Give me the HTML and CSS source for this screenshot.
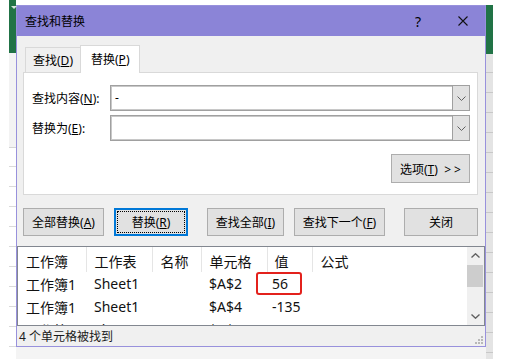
FILE: index.html
```html
<!DOCTYPE html>
<html>
<head>
<meta charset="utf-8">
<title>查找和替换</title>
<meta name="viewport" content="width=device-width, initial-scale=1">
<link rel="stylesheet" href="styles.css">
</head>
<body>
<div class="screen">

  <!-- excel sheet peeking out on the left -->
  <div class="xl-left">
    <div class="xl-col">
      <div class="xl-green"><span class="xl-arrow"></span></div>
      <div class="xl-head"></div>
      <div class="xl-grid"></div>
    </div>
  </div>

  <div class="dlg-col">
    <div class="dialog">
      <div class="titlebar">
        <span class="title">查找和替换</span>
        <span class="help">?</span>
        <svg class="close" width="10" height="10" viewBox="0 0 10 10">
          <path d="M0.5 0.5 L9.5 9.5 M9.5 0.5 L0.5 9.5" stroke="#111" stroke-width="1.1" fill="none"/>
        </svg>
      </div>

      <div class="tabs">
        <div class="tab">查找(<u>D</u>)</div>
        <div class="tab tab-active">替换(<u>P</u>)</div>
      </div>

      <div class="panel">
        <div class="field">
          <label class="field-label">查找内容(<u>N</u>):</label>
          <div class="combo">
            <span class="combo-text">-</span>
            <span class="combo-btn">
              <svg width="9" height="5" viewBox="0 0 9 5"><polyline points="0.5,0.5 4.5,4.5 8.5,0.5" stroke="#606060" fill="none"/></svg>
            </span>
          </div>
        </div>
        <div class="field">
          <label class="field-label">替换为(<u>E</u>):</label>
          <div class="combo">
            <span class="combo-text"></span>
            <span class="combo-btn">
              <svg width="9" height="5" viewBox="0 0 9 5"><polyline points="0.5,0.5 4.5,4.5 8.5,0.5" stroke="#606060" fill="none"/></svg>
            </span>
          </div>
        </div>
        <div class="opts">
          <button class="btn btn-opts">选项(<u>T</u>)&nbsp; &gt; &gt;</button>
        </div>
      </div>

      <div class="actions">
        <button class="btn btn-all">全部替换(<u>A</u>)</button>
        <button class="btn btn-one btn-focus">替换(<u>R</u>)</button>
        <button class="btn btn-findall">查找全部(<u>I</u>)</button>
        <button class="btn btn-next">查找下一个(<u>F</u>)</button>
        <button class="btn btn-close">关闭</button>
      </div>

      <div class="results">
        <div class="grid">
          <table class="ResultTable">
            <colgroup>
              <col class="c-book"><col class="c-sheet"><col class="c-name"><col class="c-cell"><col class="c-val"><col class="c-formula">
            </colgroup>
            <thead>
              <tr>
                <th>工作簿</th>
                <th>工作表</th>
                <th>名称</th>
                <th>单元格</th>
                <th class="val">值</th>
                <th>公式</th>
              </tr>
            </thead>
            <tbody>
              <tr>
                <td>工作簿1</td>
                <td>Sheet1</td>
                <td></td>
                <td>$A$2</td>
                <td class="val">56</td>
                <td></td>
              </tr>
              <tr>
                <td>工作簿1</td>
                <td>Sheet1</td>
                <td></td>
                <td>$A$4</td>
                <td class="val">-135</td>
                <td></td>
              </tr>
              <tr>
                <td>工作簿1</td>
                <td>Sheet1</td>
                <td></td>
                <td>$A$12</td>
                <td class="val">-56</td>
                <td></td>
              </tr>
            </tbody>
          </table>
        </div>
        <div class="scrollbar">
          <div class="sb-btn">
            <svg width="9" height="5" viewBox="0 0 9 5"><polyline points="0.5,4.5 4.5,0.8 8.5,4.5" stroke="#606060" stroke-width="1.4" fill="none"/></svg>
          </div>
          <div class="sb-thumb"></div>
          <div class="sb-track"></div>
          <div class="sb-btn">
            <svg width="9" height="5" viewBox="0 0 9 5"><polyline points="0.5,0.5 4.5,4.2 8.5,0.5" stroke="#606060" stroke-width="1.4" fill="none"/></svg>
          </div>
        </div>
        <!-- red annotation round the found value -->
        <span class="mark"></span>
      </div>

      <div class="status">
        <span>4 个单元格被找到</span>
        <svg class="grip" width="9" height="9" viewBox="0 0 9 9" fill="#b8b8b8">
          <rect x="7" y="1" width="2" height="2"/>
          <rect x="4" y="4" width="2" height="2"/><rect x="7" y="4" width="2" height="2"/>
          <rect x="1" y="7" width="2" height="2"/><rect x="4" y="7" width="2" height="2"/><rect x="7" y="7" width="2" height="2"/>
        </svg>
      </div>
    </div>
    <div class="below"></div>
  </div>

  <!-- excel sheet peeking out on the right -->
  <div class="xl-right">
    <div class="xl-col xl-col-r">
      <div class="xl-green xl-green-r"></div>
      <div class="xl-grid xl-shade"></div>
    </div>
  </div>

</div>
</body>
</html>
```

FILE: styles.css
```css
* { box-sizing: border-box; }
html, body { margin: 0; padding: 0; }
body {
  width: 509px;
  height: 359px;
  overflow: hidden;
  background-color: #ffffff;
  font-family: "Noto Sans", "Noto Sans CJK SC", sans-serif;
  font-size: 12px;
  color: #000000;
}
u { text-underline-offset: 1px; }

.screen { display: flex; height: 359px; }

/* excel background strips */
.xl-left { width: 16px; flex: none; padding-left: 9px; }
.xl-right { width: 23px; flex: none; }
.xl-col { width: 7px; height: 100%; display: flex; flex-direction: column; }
.xl-col-r { width: 7px; }
.xl-green { height: 53px; background-color: #217346; position: relative; }
.xl-green-r { height: 49px; margin-top: 5px; }
.xl-arrow {
  position: absolute;
  left: 2px;
  top: 6px;
  border-left: 3px solid transparent;
  border-right: 3px solid transparent;
  border-top: 3px solid #d8e6dd;
}
.xl-head { height: 95px; background-color: #f3f3f3; border-bottom: 1px solid #d4d4d4; }
.xl-grid {
  flex: 1;
  background-color: #ffffff;
  background-image: repeating-linear-gradient(to bottom, transparent 0 18px, #dadada 18px 19px, transparent 19px 20px);
}
.xl-shade {
  background-color: #e4e4e4;
  background-image: repeating-linear-gradient(to bottom, transparent 0 18px, #c8c8c8 18px 19px, transparent 19px 20px);
}

/* dialog */
.dlg-col { width: 470px; flex: none; display: flex; flex-direction: column; padding-top: 5px; }
.below { flex: 1; background-color: #f4f4f4; }
.dialog {
  height: 342px;
  border: 1px solid #9891dc;
  background-color: #f0f0f0;
  display: flex;
  flex-direction: column;
}

.titlebar {
  height: 30px;
  flex: none;
  background-color: #8b84d7;
  display: flex;
  align-items: center;
  padding-left: 8px;
}
.title { flex: 1; font-size: 12px; }
.help { font-size: 14px; margin-right: 37px; }
.close { margin-right: 17px; }

.tabs {
  height: 37px;
  flex: none;
  display: flex;
  align-items: flex-end;
  padding-left: 8px;
  margin-bottom: -1px;
  position: relative;
  z-index: 1;
}
.tab {
  width: 55px;
  height: 25px;
  margin-bottom: 1px;
  border: 1px solid #d9d9d9;
  border-right: 0;
  border-bottom: 0;
  padding-left: 7px;
  line-height: 26px;
  white-space: nowrap;
}
.tab-active {
  width: 60px;
  height: 28px;
  margin-bottom: 0;
  background-color: #ffffff;
  border-right: 1px solid #d9d9d9;
  padding-left: 10px;
  line-height: 28px;
}

.panel {
  height: 123px;
  flex: none;
  margin: 0 7px 0 6px;
  background-color: #ffffff;
  border: 1px solid #d9d9d9;
  padding: 12px 7px 0 8px;
}
.field { display: flex; align-items: center; height: 26px; }
.field + .field { margin-top: 4px; }
.field-label { width: 78px; white-space: nowrap; }
.combo {
  width: 360px;
  height: 26px;
  border: 1px solid #a0a0a0;
  box-shadow: inset 0 0 0 1px #c8c8c8;
  background-color: #ffffff;
  display: flex;
}
.combo-text { flex: 1; padding-left: 4px; line-height: 23px; }
.combo-btn {
  width: 17px;
  background-color: #e1e1e1;
  border-left: 1px solid #a0a0a0;
  display: flex;
  align-items: center;
  justify-content: center;
}
.opts { display: flex; justify-content: flex-end; margin-top: 13px; }

.btn {
  height: 28px;
  padding: 0;
  border: 1px solid #adadad;
  background-color: #e1e1e1;
  font-family: inherit;
  font-size: 12px;
  color: #000000;
  white-space: nowrap;
}
.btn-opts { width: 79px; height: 29px; }

.actions { display: flex; flex: none; margin-top: 13px; padding-left: 6px; }
.btn-all { width: 81px; }
.btn-one { width: 74px; margin-left: 10px; }
.btn-findall { width: 77px; margin-left: 19px; }
.btn-next { width: 91px; margin-left: 10px; }
.btn-close { width: 74px; margin-left: 19px; }
.btn-focus {
  border: 2px solid #0078d7;
  outline: 1px dotted #000000;
  outline-offset: -4px;
}

/* result list */
.results {
  height: 80px;
  flex: none;
  margin-top: 10px;
  border: 1px solid #828790;
  background-color: #ffffff;
  display: flex;
  position: relative;
}
.grid { flex: 1; height: 78px; overflow: hidden; }
table.ResultTable {
  border-collapse: collapse;
  table-layout: fixed;
  width: 447px;
  font-size: 14px;
  color: #111111;
}
.c-book { width: 68px; }
.c-sheet { width: 66px; }
.c-name { width: 49px; }
.c-cell { width: 66px; }
.c-val { width: 45px; }
.c-formula { width: 153px; }
table.ResultTable th {
  height: 25px;
  padding: 2px 0 0 8px;
  font-weight: normal;
  text-align: left;
  border-right: 1px solid #e5e5e5;
  white-space: nowrap;
}
table.ResultTable td {
  height: 23px;
  padding: 0 0 0 8px;
  white-space: nowrap;
}
table.ResultTable .val { padding-left: 5px; }
table.ResultTable th.val { padding-left: 7px; }

.scrollbar {
  width: 17px;
  flex: none;
  margin-left: 2px;
  background-color: #f0f0f0;
  display: flex;
  flex-direction: column;
}
.sb-btn { height: 17px; display: flex; align-items: center; justify-content: center; }
.sb-thumb { height: 22px; margin: 1px 1px 0 0; background-color: #cdcdcd; }
.sb-track { flex: 1; }

.mark {
  position: absolute;
  left: 238px;
  top: 25px;
  width: 46px;
  height: 23px;
  border: 2px solid #e3211c;
  border-radius: 3px;
}

.status {
  flex: 1;
  display: flex;
  align-items: center;
  padding-left: 2px;
  font-size: 12px;
  color: #1a1a1a;
}
.status span { flex: 1; }
.grip { align-self: flex-end; margin: 0 2px 2px 0; }
```
